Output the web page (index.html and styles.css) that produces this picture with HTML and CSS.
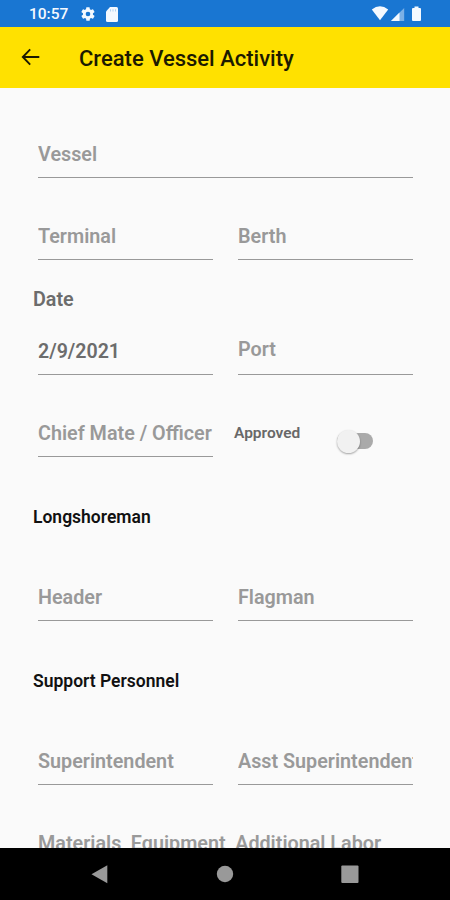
FILE: index.html
```html
<!DOCTYPE html>
<html lang="en">
<head>
<meta charset="utf-8">
<title>Create Vessel Activity</title>
<link rel="stylesheet" href="styles.css">
</head>
<body>
<div class="screen">
  <div class="status">
    <span class="clock">10:57</span>
    <svg class="gear" width="16" height="16" viewBox="0 0 24 24"><path fill="currentColor" fill-rule="evenodd" d="M19.4 13a7.800 7.800 0 0 0 0-2l2.200-1.700a.5.5 0 0 0 .1-.6l-2-3.500a.5.5 0 0 0-.6-.2l-2.600 1a7.700 7.700 0 0 0-1.700-1l-.4-2.600a.5.5 0 0 0-.5-.4h-4a.5.5 0 0 0-.5.400l-.4 2.600a7.700 7.700 0 0 0-1.700 1l-2.500-1a.5.5 0 0 0-.6.200l-2 3.500a.5.5 0 0 0 .1.600L4.500 11a7.800 7.800 0 0 0 0 2l-2.100 1.700a.5.5 0 0 0-.1.600l2 3.500c.1.200.4.300.6.200l2.500-1a7.700 7.700 0 0 0 1.700 1l.4 2.600c0 .2.200.4.500.4h4c.2 0 .5-.2.500-.4l.4-2.600a7.700 7.700 0 0 0 1.700-1l2.500 1c.2.100.5 0 .6-.2l2-3.500a.5.5 0 0 0-.1-.6zM12 15.500a3.500 3.500 0 1 1 0-7a3.500 3.500 0 0 1 0 7z"/></svg>
    <svg class="card" width="12" height="15" viewBox="0 0 12 15"><path fill="currentColor" d="M4 0h6.500Q12 0 12 1.500v12Q12 15 10.500 15h-9Q0 15 0 13.500V4.500z"/><path stroke="#1976d2" stroke-opacity=".3" stroke-width="1" d="M4.500 2.300v2.200M7 2.300v2.200M9.500 2.300v2.200"/></svg>
    <svg class="signals" width="52" height="16" viewBox="0 0 52 16"><path fill="currentColor" d="M.8 3.500Q9-2.800 17.200 3.500L9 14.200z"/><path fill="currentColor" opacity=".45" d="M20 15L33.200 2v13z"/><path fill="currentColor" d="M20 15l8.500-8.400V15z"/><path fill="currentColor" d="M43.500.5h4V2H49q1 0 1 1v11q0 1-1 1h-7q-1 0-1-1V3q0-1 1-1h1.500z"/></svg>
  </div>
  <header class="appbar">
    <svg class="back" width="20" height="18" viewBox="0 0 20 18"><path fill="none" stroke="#1c1a00" stroke-width="1.900" d="M19.300 9H3M10.200 1.400L2.800 9l7.400 7.600"/></svg>
    <h1 class="title">Create Vessel Activity</h1>
  </header>
  <main class="form">
    <div class="row"><div class="field">Vessel</div></div>
    <div class="row"><div class="field">Terminal</div><div class="field">Berth</div></div>
    <div class="date-label">Date</div>
    <div class="row short"><div class="field filled">2/9/2021</div><div class="field port">Port</div></div>
    <div class="row">
      <div class="field">Chief Mate / Officer</div>
      <div class="toggle"><span class="toggle-label">Approved</span><span class="switch"><span class="thumb"></span></span></div>
    </div>
    <h2 class="section">Longshoreman</h2>
    <div class="row"><div class="field">Header</div><div class="field">Flagman</div></div>
    <h2 class="section">Support Personnel</h2>
    <div class="row"><div class="field">Superintendent</div><div class="field">Asst Superintendent</div></div>
    <div class="row"><div class="field">Materials, Equipment, Additional Labor</div></div>
  </main>
  <nav class="nav">
    <svg width="450" height="52" viewBox="0 0 450 52" fill="#999"><path d="M91.500 26.200L107.300 17.300v17.900z"/><circle cx="225" cy="26" r="8.200"/><rect x="341.300" y="17.500" width="17.200" height="17.500" rx="1"/></svg>
  </nav>
</div>
</body>
</html>
```
FILE: styles.css
```css
* { box-sizing: border-box; }
body { margin: 0; font-family: Roboto, sans-serif; }
.screen { width: 450px; height: 900px; display: flex; flex-direction: column; overflow: hidden; background: #fafafa; }
.status { flex: 0 0 27px; display: flex; align-items: center; padding: 1px 27px 0 29px; background: #1976d2; color: #f4f9ff; }
.clock { width: 51px; font-size: 15.500px; font-weight: 500; }
.card { margin-left: 10px; }
.signals { margin-left: auto; margin-top: -1px; }
.appbar { flex: 0 0 61px; display: flex; align-items: center; padding-left: 20px; background: #ffe100; }
.back { margin-top: -2px; }
.title { margin: 2px 0 0 39px; font-size: 22px; font-weight: 500; color: #1c1a00; white-space: nowrap; }
.form { flex: 1; min-height: 0; overflow: hidden; padding: 8px 37px 0 38px; }
.row { height: 82px; display: flex; align-items: flex-end; gap: 25px; }
.field { flex: 1 1 0; min-width: 0; height: 47px; padding-top: 12px; border-bottom: 1px solid #999; overflow: hidden; white-space: nowrap; font-size: 19.750px; line-height: 23px; font-weight: 600; color: #999; }
.filled { font-size: 19.600px; color: #6c6c6c; }
.port { padding-top: 10px; }
.date-label { height: 60px; margin-left: -5px; padding-top: 28px; font-size: 19.750px; line-height: 23px; font-weight: 600; color: #6c6c6c; }
.short { height: 55px; }
.toggle { flex: 0 0 179px; height: 47px; margin-left: -4px; display: flex; align-items: flex-start; }
.toggle-label { width: 103px; padding-top: 13px; font-size: 15.500px; line-height: 20px; font-weight: 600; color: #686868; }
.switch { width: 36px; height: 16px; margin-top: 23px; border-radius: 8px; background: #aaa; }
.thumb { display: block; width: 23px; height: 23px; margin-top: -3.500px; border-radius: 50%; background: #f1f1f1; box-shadow: 0 1px 2px rgba(0, 0, 0, .35); }
.section { height: 82px; margin: 0 0 0 -5px; padding-top: 50px; font-size: 17.500px; line-height: 20px; font-weight: 600; color: #111; }
.nav { flex: 0 0 52px; background: #000; }
.nav svg { display: block; }
```
